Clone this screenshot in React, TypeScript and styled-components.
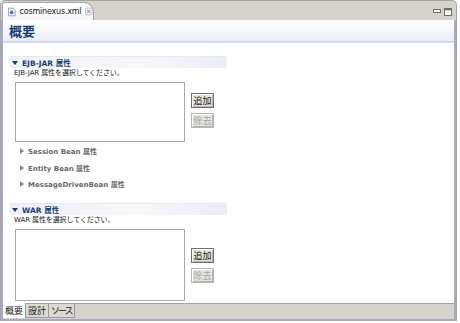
import React from "react";
import styled, { createGlobalStyle } from "styled-components";

const GlobalStyle = createGlobalStyle`
  body {
    margin: 0;
    background: #ffffff;
    font-family: "DejaVu Sans", "Noto Sans CJK JP", sans-serif;
  }
`;

const Frame = styled.div`
  width: 457px;
  height: 321px;
  display: flex;
  flex-direction: column;
  background: #d6d3cc;
  border-top-left-radius: 5px;
  border-top-right-radius: 5px;
  border: 1px solid #a8a69e;
  border-bottom: none;
  box-sizing: border-box;
  overflow: hidden;
`;

const TabBar = styled.div`
  height: 19px;
  display: flex;
  align-items: flex-end;
  justify-content: space-between;
  padding-left: 1px;
  flex-shrink: 0;
`;

const EditorTab = styled.div`
  height: 18px;
  width: 92px;
  display: flex;
  align-items: center;
  gap: 4px;
  padding-left: 5px;
  box-sizing: border-box;
  background: linear-gradient(#ffffff, #f4f6fa);
  border: 1px solid #9ea6c0;
  border-bottom: none;
  border-top-left-radius: 4px;
  border-top-right-radius: 10px;
  font-size: 8px;
  color: #222;
`;

const TabText = styled.span`
  letter-spacing: -0.2px;
`;

const WindowButtons = styled.div`
  display: flex;
  gap: 3px;
  align-items: center;
  align-self: center;
  padding-right: 4px;
  margin-top: 2px;
`;

const Content = styled.div`
  flex: 1;
  display: flex;
  flex-direction: column;
  background: #ffffff;
  border-left: 2px solid #a3abc6;
  border-right: 2px solid #a3abc6;
  min-height: 0;
`;

const PageHeader = styled.div`
  height: 21px;
  display: flex;
  align-items: center;
  padding-left: 6px;
  background: linear-gradient(#ffffff, #e9edf5);
  border-bottom: 2px solid #d5dbea;
  font-family: "Noto Sans CJK JP", sans-serif;
  font-weight: 700;
  font-size: 13px;
  color: #1c3a78;
  flex-shrink: 0;
`;

const Body = styled.div`
  flex: 1;
  padding: 13px 0 0 6px;
  display: flex;
  flex-direction: column;
`;

const Section = styled.div<{ $top: number }>`
  margin-top: ${(p) => p.$top}px;
`;

const SectionBar = styled.div`
  width: 218px;
  height: 12px;
  display: flex;
  align-items: center;
  gap: 4px;
  padding-left: 3px;
  background: linear-gradient(90deg, #eef1f7, #f7f8fb 60%, #eaedf4);
  border-radius: 3px;
  border-top: 1px solid #e4e8f0;
  font-size: 7.5px;
  font-weight: 700;
  color: #1c3a78;
  box-sizing: border-box;
`;

const Hint = styled.div`
  height: 10px;
  line-height: 10px;
  font-size: 7px;
  color: #1a1a1a;
  padding-left: 5px;
  letter-spacing: -0.1px;
`;

const ListRow = styled.div`
  display: flex;
  gap: 6px;
  margin-top: 4px;
  padding-left: 6px;
`;

const ListBox = styled.div<{ $h: number }>`
  width: 170px;
  height: ${(p) => p.$h}px;
  border: 1px solid #a9a9a9;
  box-sizing: border-box;
  background: #fff;
`;

const ButtonCol = styled.div<{ $top: number }>`
  display: flex;
  flex-direction: column;
  gap: 5px;
  padding-top: ${(p) => p.$top}px;
`;

const Button = styled.div<{ $disabled?: boolean }>`
  width: 23px;
  height: 15px;
  display: flex;
  align-items: center;
  justify-content: center;
  box-sizing: border-box;
  background: #e6e4de;
  border: 1px solid ${(p) => (p.$disabled ? "#b5b5b5" : "#6f6f6f")};
  box-shadow: inset 1px 1px 0 #ffffff, inset -1px -1px 0 #b8b5ad;
  font-family: "Noto Sans CJK JP", sans-serif;
  font-size: 9px;
  color: ${(p) => (p.$disabled ? "#a6a6a6" : "#1a1a1a")};
`;

const Collapsed = styled.div`
  display: flex;
  flex-direction: column;
  gap: 6.5px;
  padding: 4px 0 0 11px;
`;

const CollapsedItem = styled.div`
  height: 10px;
  display: flex;
  align-items: center;
  gap: 4px;
  font-size: 7px;
  font-weight: 700;
  color: #6a6a6a;
`;

const BottomTabs = styled.div`
  height: 18px;
  display: flex;
  align-items: flex-start;
  background: #d6d3cc;
  border-top: 1px solid #a5a39d;
  border-left: 2px solid #a3abc6;
  border-right: 2px solid #a3abc6;
  border-bottom: 2px solid #a3abc6;
  box-sizing: border-box;
  flex-shrink: 0;
`;

const PageTab = styled.div<{ $active?: boolean; $narrow?: boolean }>`
  height: ${(p) => (p.$active ? "15px" : "14px")};
  margin-top: ${(p) => (p.$active ? "-1px" : "0")};
  padding: 0 2px;
  display: flex;
  align-items: center;
  font-family: "Noto Sans CJK JP", sans-serif;
  font-size: 9px;
  letter-spacing: ${(p) => (p.$narrow ? "-2px" : "0")};
  color: #1a1a1a;
  background: ${(p) => (p.$active ? "#ffffff" : "#dcd9d2")};
  border-right: 1px solid #9c9a94;
  border-bottom: ${(p) => (p.$active ? "none" : "1px solid #9c9a94")};
  box-sizing: border-box;
`;

const Triangle = ({ open }: { open: boolean }) =>
  open ? (
    <svg width="6" height="4" viewBox="0 0 6 4">
      <path d="M0 0 H6 L3 4 Z" fill="#1c3a78" />
    </svg>
  ) : (
    <svg width="4" height="6" viewBox="0 0 4 6">
      <path d="M0 0 V6 L4 3 Z" fill="#8a8a8a" />
    </svg>
  );

const FileIcon = () => (
  <svg width="9" height="10" viewBox="0 0 9 10">
    <path d="M0.5 0.5 H6 L8.5 3 V9.5 H0.5 Z" fill="#f4f4f4" stroke="#8c96b0" />
    <circle cx="4.3" cy="5.5" r="2.2" fill="#3b7bd0" />
  </svg>
);

const CloseIcon = () => (
  <svg width="9" height="9" viewBox="0 0 9 9">
    <rect x="0.5" y="0.5" width="8" height="8" rx="1.5" fill="none" stroke="#b6b6b6" />
    <path d="M2.5 2.5 L6.5 6.5 M6.5 2.5 L2.5 6.5" stroke="#9a9a9a" strokeWidth="1.2" />
  </svg>
);

const MinIcon = () => (
  <svg width="8" height="5" viewBox="0 0 8 5">
    <rect x="0.5" y="0.5" width="7" height="3" fill="#fff" stroke="#6e6e6e" />
  </svg>
);

const MaxIcon = () => (
  <svg width="8" height="8" viewBox="0 0 8 8">
    <rect x="0.5" y="0.5" width="7" height="7" fill="#fff" stroke="#6e6e6e" />
    <line x1="0.5" y1="1.5" x2="7.5" y2="1.5" stroke="#6e6e6e" strokeWidth="1.5" />
  </svg>
);

const beans = ["Session Bean 属性", "Entity Bean 属性", "MessageDrivenBean 属性"];

export default function App() {
  return (
    <>
      <GlobalStyle />
      <Frame>
        <TabBar>
          <EditorTab>
            <FileIcon />
            <TabText>cosminexus.xml</TabText>
            <CloseIcon />
          </EditorTab>
          <WindowButtons>
            <MinIcon />
            <MaxIcon />
          </WindowButtons>
        </TabBar>
        <Content>
          <PageHeader>概要</PageHeader>
          <Body>
            <Section $top={0}>
              <SectionBar>
                <Triangle open />
                EJB-JAR 属性
              </SectionBar>
              <Hint>EJB-JAR 属性を選択してください。</Hint>
              <ListRow>
                <ListBox $h={60} />
                <ButtonCol $top={11}>
                  <Button>追加</Button>
                  <Button $disabled>除去</Button>
                </ButtonCol>
              </ListRow>
            </Section>
            <Collapsed>
              {beans.map((b) => (
                <CollapsedItem key={b}>
                  <Triangle open={false} />
                  {b}
                </CollapsedItem>
              ))}
            </Collapsed>
            <Section $top={14}>
              <SectionBar>
                <Triangle open />
                WAR 属性
              </SectionBar>
              <Hint>WAR 属性を選択してください。</Hint>
              <ListRow>
                <ListBox $h={72} />
                <ButtonCol $top={19}>
                  <Button>追加</Button>
                  <Button $disabled>除去</Button>
                </ButtonCol>
              </ListRow>
            </Section>
          </Body>
        </Content>
        <BottomTabs>
          <PageTab $active>概要</PageTab>
          <PageTab>設計</PageTab>
          <PageTab $narrow>ソース</PageTab>
        </BottomTabs>
      </Frame>
    </>
  );
}
